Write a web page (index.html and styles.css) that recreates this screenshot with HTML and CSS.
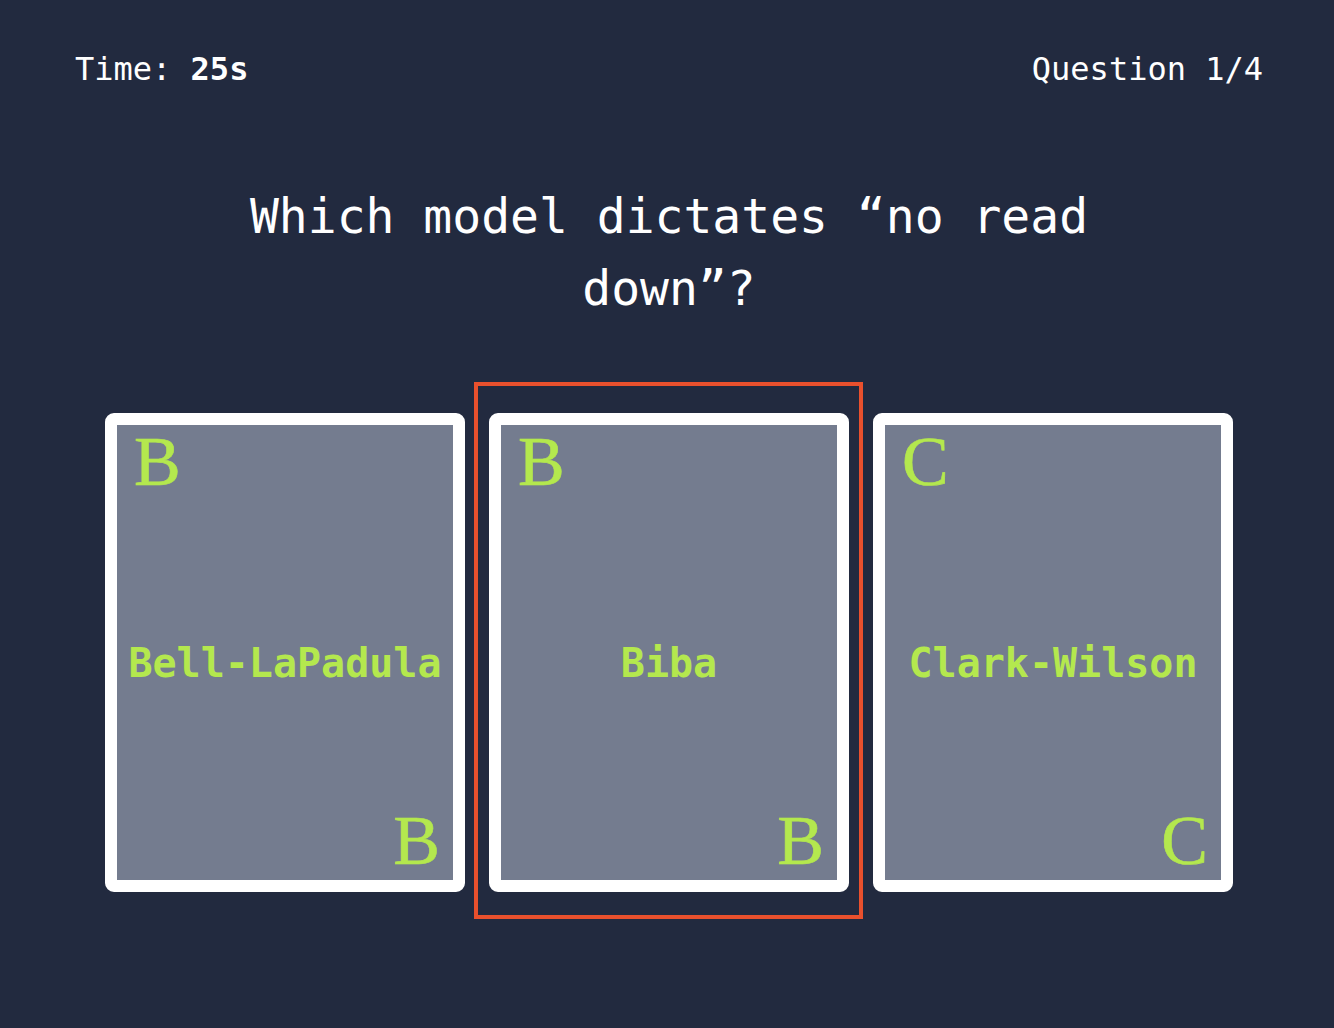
FILE: index.html
```html
<!DOCTYPE html>
<html lang="en">
<head>
<meta charset="utf-8">
<title>Quiz</title>
<link rel="stylesheet" href="styles.css">
</head>
<body>
<main class="quiz">
  <header class="status">
    <div class="timer">Time: <strong>25s</strong></div>
    <div class="progress">Question 1/4</div>
  </header>
  <h1 class="question">Which model dictates “no read down”?</h1>
  <section class="cards">
    <div class="card">
      <span class="corner corner-top">B</span>
      <span class="label">Bell-LaPadula</span>
      <span class="corner corner-bottom">B</span>
    </div>
    <div class="card selected">
      <span class="corner corner-top">B</span>
      <span class="label">Biba</span>
      <span class="corner corner-bottom">B</span>
    </div>
    <div class="card">
      <span class="corner corner-top">C</span>
      <span class="label">Clark-Wilson</span>
      <span class="corner corner-bottom">C</span>
    </div>
  </section>
</main>
</body>
</html>
```

FILE: styles.css
```css
html, body {
  margin: 0;
  padding: 0;
  background: #222a3f;
}

body {
  font-family: "DejaVu Sans Mono", "Liberation Mono", monospace;
  color: #ffffff;
  min-height: 1028px;
}

.quiz {
  display: flex;
  flex-direction: column;
}

.status {
  display: flex;
  justify-content: space-between;
  padding: 45px 71px 0 75px;
  font-size: 32px;
  line-height: 48px;
}

.timer strong {
  font-weight: bold;
}

.question {
  margin: 87px auto 0;
  width: 900px;
  text-align: center;
  font-size: 48px;
  line-height: 72px;
  font-weight: normal;
  position: relative;
  left: 2px;
}

.cards {
  display: flex;
  justify-content: center;
  gap: 24px;
  margin: 89px 0 0 4px;
}

.card {
  position: relative;
  box-sizing: border-box;
  width: 360px;
  height: 479px;
  border: 12px solid #ffffff;
  border-radius: 9px;
  background: #747c8f;
  display: flex;
  flex-direction: column;
  color: #b4e84e;
}

.card.selected::before {
  content: "";
  position: absolute;
  left: -27px;
  right: -26px;
  top: -43px;
  bottom: -39px;
  border: 4px solid #e9502d;
  pointer-events: none;
}

.corner {
  font-family: "Liberation Serif", "Times New Roman", serif;
  font-size: 70px;
  line-height: 70px;
  -webkit-text-stroke: 0.6px #b4e84e;
}

.corner-top {
  align-self: flex-start;
  padding: 2px 0 0 17px;
}

.corner-bottom {
  align-self: flex-end;
  padding: 0 13px 4px 0;
}

.label {
  flex: 1;
  display: flex;
  align-items: center;
  justify-content: center;
  padding-top: 22px;
  font-size: 40px;
  font-weight: bold;
  white-space: nowrap;
}
```
